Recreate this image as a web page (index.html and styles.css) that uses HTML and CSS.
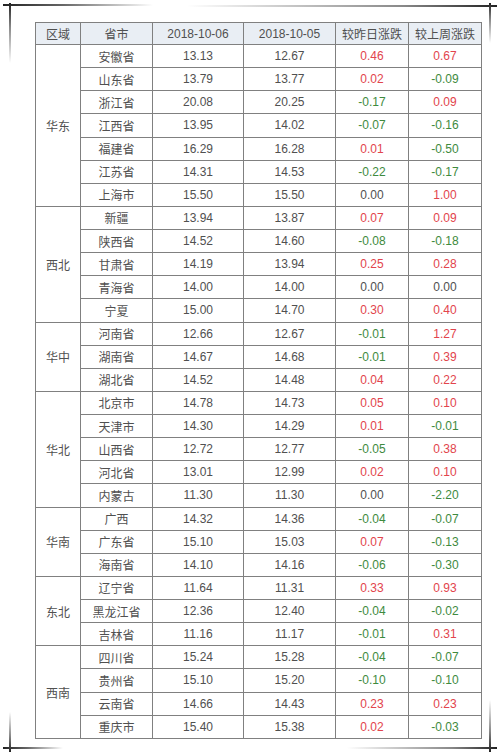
FILE: index.html
```html
<!DOCTYPE html>
<html>
<head>
<meta charset="utf-8">
<link rel="stylesheet" href="styles.css">
</head>
<body>
<div class="page">
  <span class="mark h tl"></span><span class="mark v tl-v"></span>
  <span class="mark h tr"></span><span class="mark v tr-v"></span>
  <span class="mark h bl"></span><span class="mark v bl-v"></span>
  <span class="mark h br"></span><span class="mark v br-v"></span>
  <table class="grid">
    <colgroup>
      <col class="c1"><col class="c2"><col class="c3"><col class="c4"><col class="c5"><col class="c6">
    </colgroup>
    <thead>
      <tr><th>区域</th><th>省市</th><th>2018-10-06</th><th>2018-10-05</th><th>较昨日涨跌</th><th>较上周涨跌</th></tr>
    </thead>
    <tbody>
      <tr><td rowspan="7">华东</td><td>安徽省</td><td>13.13</td><td>12.67</td><td class="up">0.46</td><td class="up">0.67</td></tr>
      <tr><td>山东省</td><td>13.79</td><td>13.77</td><td class="up">0.02</td><td class="dn">-0.09</td></tr>
      <tr><td>浙江省</td><td>20.08</td><td>20.25</td><td class="dn">-0.17</td><td class="up">0.09</td></tr>
      <tr><td>江西省</td><td>13.95</td><td>14.02</td><td class="dn">-0.07</td><td class="dn">-0.16</td></tr>
      <tr><td>福建省</td><td>16.29</td><td>16.28</td><td class="up">0.01</td><td class="dn">-0.50</td></tr>
      <tr><td>江苏省</td><td>14.31</td><td>14.53</td><td class="dn">-0.22</td><td class="dn">-0.17</td></tr>
      <tr><td>上海市</td><td>15.50</td><td>15.50</td><td>0.00</td><td class="up">1.00</td></tr>
      <tr><td rowspan="5">西北</td><td>新疆</td><td>13.94</td><td>13.87</td><td class="up">0.07</td><td class="up">0.09</td></tr>
      <tr><td>陕西省</td><td>14.52</td><td>14.60</td><td class="dn">-0.08</td><td class="dn">-0.18</td></tr>
      <tr><td>甘肃省</td><td>14.19</td><td>13.94</td><td class="up">0.25</td><td class="up">0.28</td></tr>
      <tr><td>青海省</td><td>14.00</td><td>14.00</td><td>0.00</td><td>0.00</td></tr>
      <tr><td>宁夏</td><td>15.00</td><td>14.70</td><td class="up">0.30</td><td class="up">0.40</td></tr>
      <tr><td rowspan="3">华中</td><td>河南省</td><td>12.66</td><td>12.67</td><td class="dn">-0.01</td><td class="up">1.27</td></tr>
      <tr><td>湖南省</td><td>14.67</td><td>14.68</td><td class="dn">-0.01</td><td class="up">0.39</td></tr>
      <tr><td>湖北省</td><td>14.52</td><td>14.48</td><td class="up">0.04</td><td class="up">0.22</td></tr>
      <tr><td rowspan="5">华北</td><td>北京市</td><td>14.78</td><td>14.73</td><td class="up">0.05</td><td class="up">0.10</td></tr>
      <tr><td>天津市</td><td>14.30</td><td>14.29</td><td class="up">0.01</td><td class="dn">-0.01</td></tr>
      <tr><td>山西省</td><td>12.72</td><td>12.77</td><td class="dn">-0.05</td><td class="up">0.38</td></tr>
      <tr><td>河北省</td><td>13.01</td><td>12.99</td><td class="up">0.02</td><td class="up">0.10</td></tr>
      <tr><td>内蒙古</td><td>11.30</td><td>11.30</td><td>0.00</td><td class="dn">-2.20</td></tr>
      <tr><td rowspan="3">华南</td><td>广西</td><td>14.32</td><td>14.36</td><td class="dn">-0.04</td><td class="dn">-0.07</td></tr>
      <tr><td>广东省</td><td>15.10</td><td>15.03</td><td class="up">0.07</td><td class="dn">-0.13</td></tr>
      <tr><td>海南省</td><td>14.10</td><td>14.16</td><td class="dn">-0.06</td><td class="dn">-0.30</td></tr>
      <tr><td rowspan="3">东北</td><td>辽宁省</td><td>11.64</td><td>11.31</td><td class="up">0.33</td><td class="up">0.93</td></tr>
      <tr><td>黑龙江省</td><td>12.36</td><td>12.40</td><td class="dn">-0.04</td><td class="dn">-0.02</td></tr>
      <tr><td>吉林省</td><td>11.16</td><td>11.17</td><td class="dn">-0.01</td><td class="up">0.31</td></tr>
      <tr><td rowspan="4">西南</td><td>四川省</td><td>15.24</td><td>15.28</td><td class="dn">-0.04</td><td class="dn">-0.07</td></tr>
      <tr><td>贵州省</td><td>15.10</td><td>15.20</td><td class="dn">-0.10</td><td class="dn">-0.10</td></tr>
      <tr><td>云南省</td><td>14.66</td><td>14.43</td><td class="up">0.23</td><td class="up">0.23</td></tr>
      <tr><td>重庆市</td><td>15.40</td><td>15.38</td><td class="up">0.02</td><td class="dn">-0.03</td></tr>
    </tbody>
  </table>
</div>
</body>
</html>
```

FILE: styles.css
```css
html, body {
  margin: 0;
  padding: 0;
  background: #ffffff;
}
.page {
  position: relative;
  width: 500px;
  height: 754px;
  padding: 22px 0 0 35px;
  box-sizing: border-box;
  font-family: "Liberation Sans", Arial, "Noto Sans CJK SC", sans-serif;
  font-size: 12px;
  color: #505050;
}
.grid {
  width: 447px;
  table-layout: fixed;
  border-collapse: separate;
  border-spacing: 0;
  border-top: 1px solid #808080;
  border-left: 1px solid #808080;
}
.c1 { width: 45px; }
.c2 { width: 72px; }
.c3 { width: 91px; }
.c4 { width: 92px; }
.c5 { width: 73px; }
.c6 { width: 73px; }
.grid th, .grid td {
  border-right: 1px solid #808080;
  border-bottom: 1px solid #808080;
  padding: 0;
  text-align: center;
  vertical-align: middle;
  font-weight: normal;
  box-sizing: border-box;
}
.grid th {
  height: 22px;
  background: #e9eef4;
  color: #505050;
}
.grid td {
  height: 23.13px;
}
.up { color: #e2444c; }
.dn { color: #3e8a3e; }

.mark {
  position: absolute;
  display: block;
}
.mark.h { height: 2px; }
.mark.v { width: 2px; }
.tl { left: 3px; top: 4px; width: 150px; background: linear-gradient(to right, #222 0%, #666 40%, rgba(255,255,255,0) 100%); }
.tl-v { left: 9px; top: 3px; height: 60px; background: linear-gradient(to bottom, #222 0%, #888 40%, rgba(255,255,255,0) 100%); }
.tr { right: 3px; top: 5px; width: 310px; background: linear-gradient(to left, #222 0%, #888 30%, rgba(255,255,255,0) 100%); }
.tr-v { left: 489px; top: 3px; height: 40px; background: linear-gradient(to bottom, #222 0%, #888 40%, rgba(255,255,255,0) 100%); }
.bl { left: 3px; top: 747px; width: 60px; background: linear-gradient(to right, #222 0%, #666 40%, rgba(255,255,255,0) 100%); }
.bl-v { left: 9px; top: 712px; height: 40px; background: linear-gradient(to top, #222 0%, #888 40%, rgba(255,255,255,0) 100%); }
.br { right: 3px; top: 747px; width: 150px; background: linear-gradient(to left, #222 0%, #888 30%, rgba(255,255,255,0) 100%); }
.br-v { left: 489px; top: 700px; height: 52px; background: linear-gradient(to top, #222 0%, #888 40%, rgba(255,255,255,0) 100%); }
```
